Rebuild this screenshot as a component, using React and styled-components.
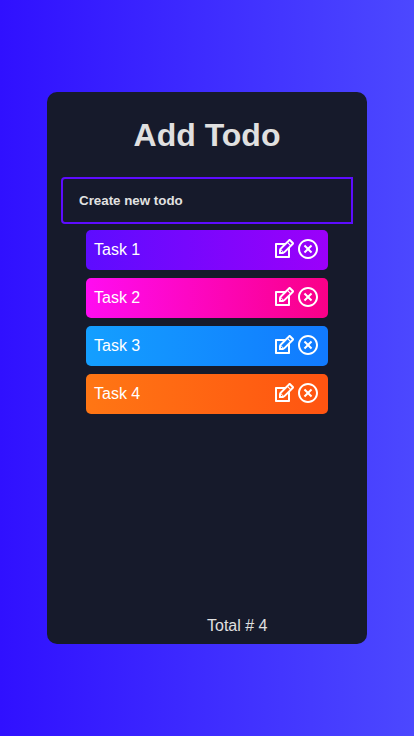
import React from "react";
import styled, { createGlobalStyle } from "styled-components";
import { RiCloseCircleLine } from "react-icons/ri";
import { TiEdit } from "react-icons/ti";

const GlobalStyle = createGlobalStyle`
  * { box-sizing: border-box; margin: 0; padding: 0; }
  body { font-family: "Liberation Sans", Arial, sans-serif; }
`;

const Page = styled.div`
  min-height: 100vh;
  padding-top: 92px;
  background: linear-gradient(90deg, rgb(48, 16, 255) 0%, rgb(76, 72, 255) 100%);
`;

const Card = styled.main`
  display: flex;
  flex-direction: column;
  align-items: center;
  width: 320px;
  height: 552px;
  margin: 0 auto;
  border-radius: 10px;
  background: #161a2b;
`;

const Title = styled.h1`
  margin-top: 24px;
  font-size: 32px;
  line-height: 38px;
  color: #e0e0e0;
`;

const TodoInput = styled.input`
  width: 292px;
  height: 47px;
  margin-top: 23px;
  padding: 0 16px;
  border: 2px solid #5d0cff;
  border-radius: 4px 0 0 4px;
  outline: none;
  background: transparent;
  color: #fff;
  font: bold 13.333px "Liberation Sans", Arial, sans-serif;
  &::placeholder { color: #e2e2e2; opacity: 1; }
`;

const List = styled.ul`
  display: flex;
  flex-direction: column;
  gap: 8px;
  flex: 1;
  margin-top: 6px;
  list-style: none;
`;

const Row = styled.li`
  display: flex;
  align-items: center;
  justify-content: space-between;
  width: 242px;
  height: 40px;
  padding: 0 8px;
  border-radius: 5px;
  color: #fff;
  font-size: 16px;
  background: linear-gradient(90deg, ${(p) => p.$from} 0%, ${(p) => p.$to} 100%);
`;

const Actions = styled.span`
  display: flex;
  align-items: center;
  padding-bottom: 2px;
  font-size: 24px;
`;

const Total = styled.p`
  align-self: flex-start;
  margin: 0 0 9px 160px;
  font-size: 16px;
  line-height: 18px;
  color: #e0e0e0;
`;

const tasks = [
  { name: "Task 1", from: "#5d0cff", to: "#9b00fa" },
  { name: "Task 2", from: "#ff0cf1", to: "#fa0087" },
  { name: "Task 3", from: "#149fff", to: "#117aff" },
  { name: "Task 4", from: "#ff7614", to: "#ff5411" },
];

export default function App() {
  return (
    <Page>
      <GlobalStyle />
      <Card>
        <Title>Add Todo</Title>
        <TodoInput placeholder="Create new todo" />
        <List>
          {tasks.map((t) => (
            <Row key={t.name} $from={t.from} $to={t.to}>
              {t.name}
              <Actions>
                <TiEdit />
                <RiCloseCircleLine />
              </Actions>
            </Row>
          ))}
        </List>
        <Total>Total # {tasks.length}</Total>
      </Card>
    </Page>
  );
}
